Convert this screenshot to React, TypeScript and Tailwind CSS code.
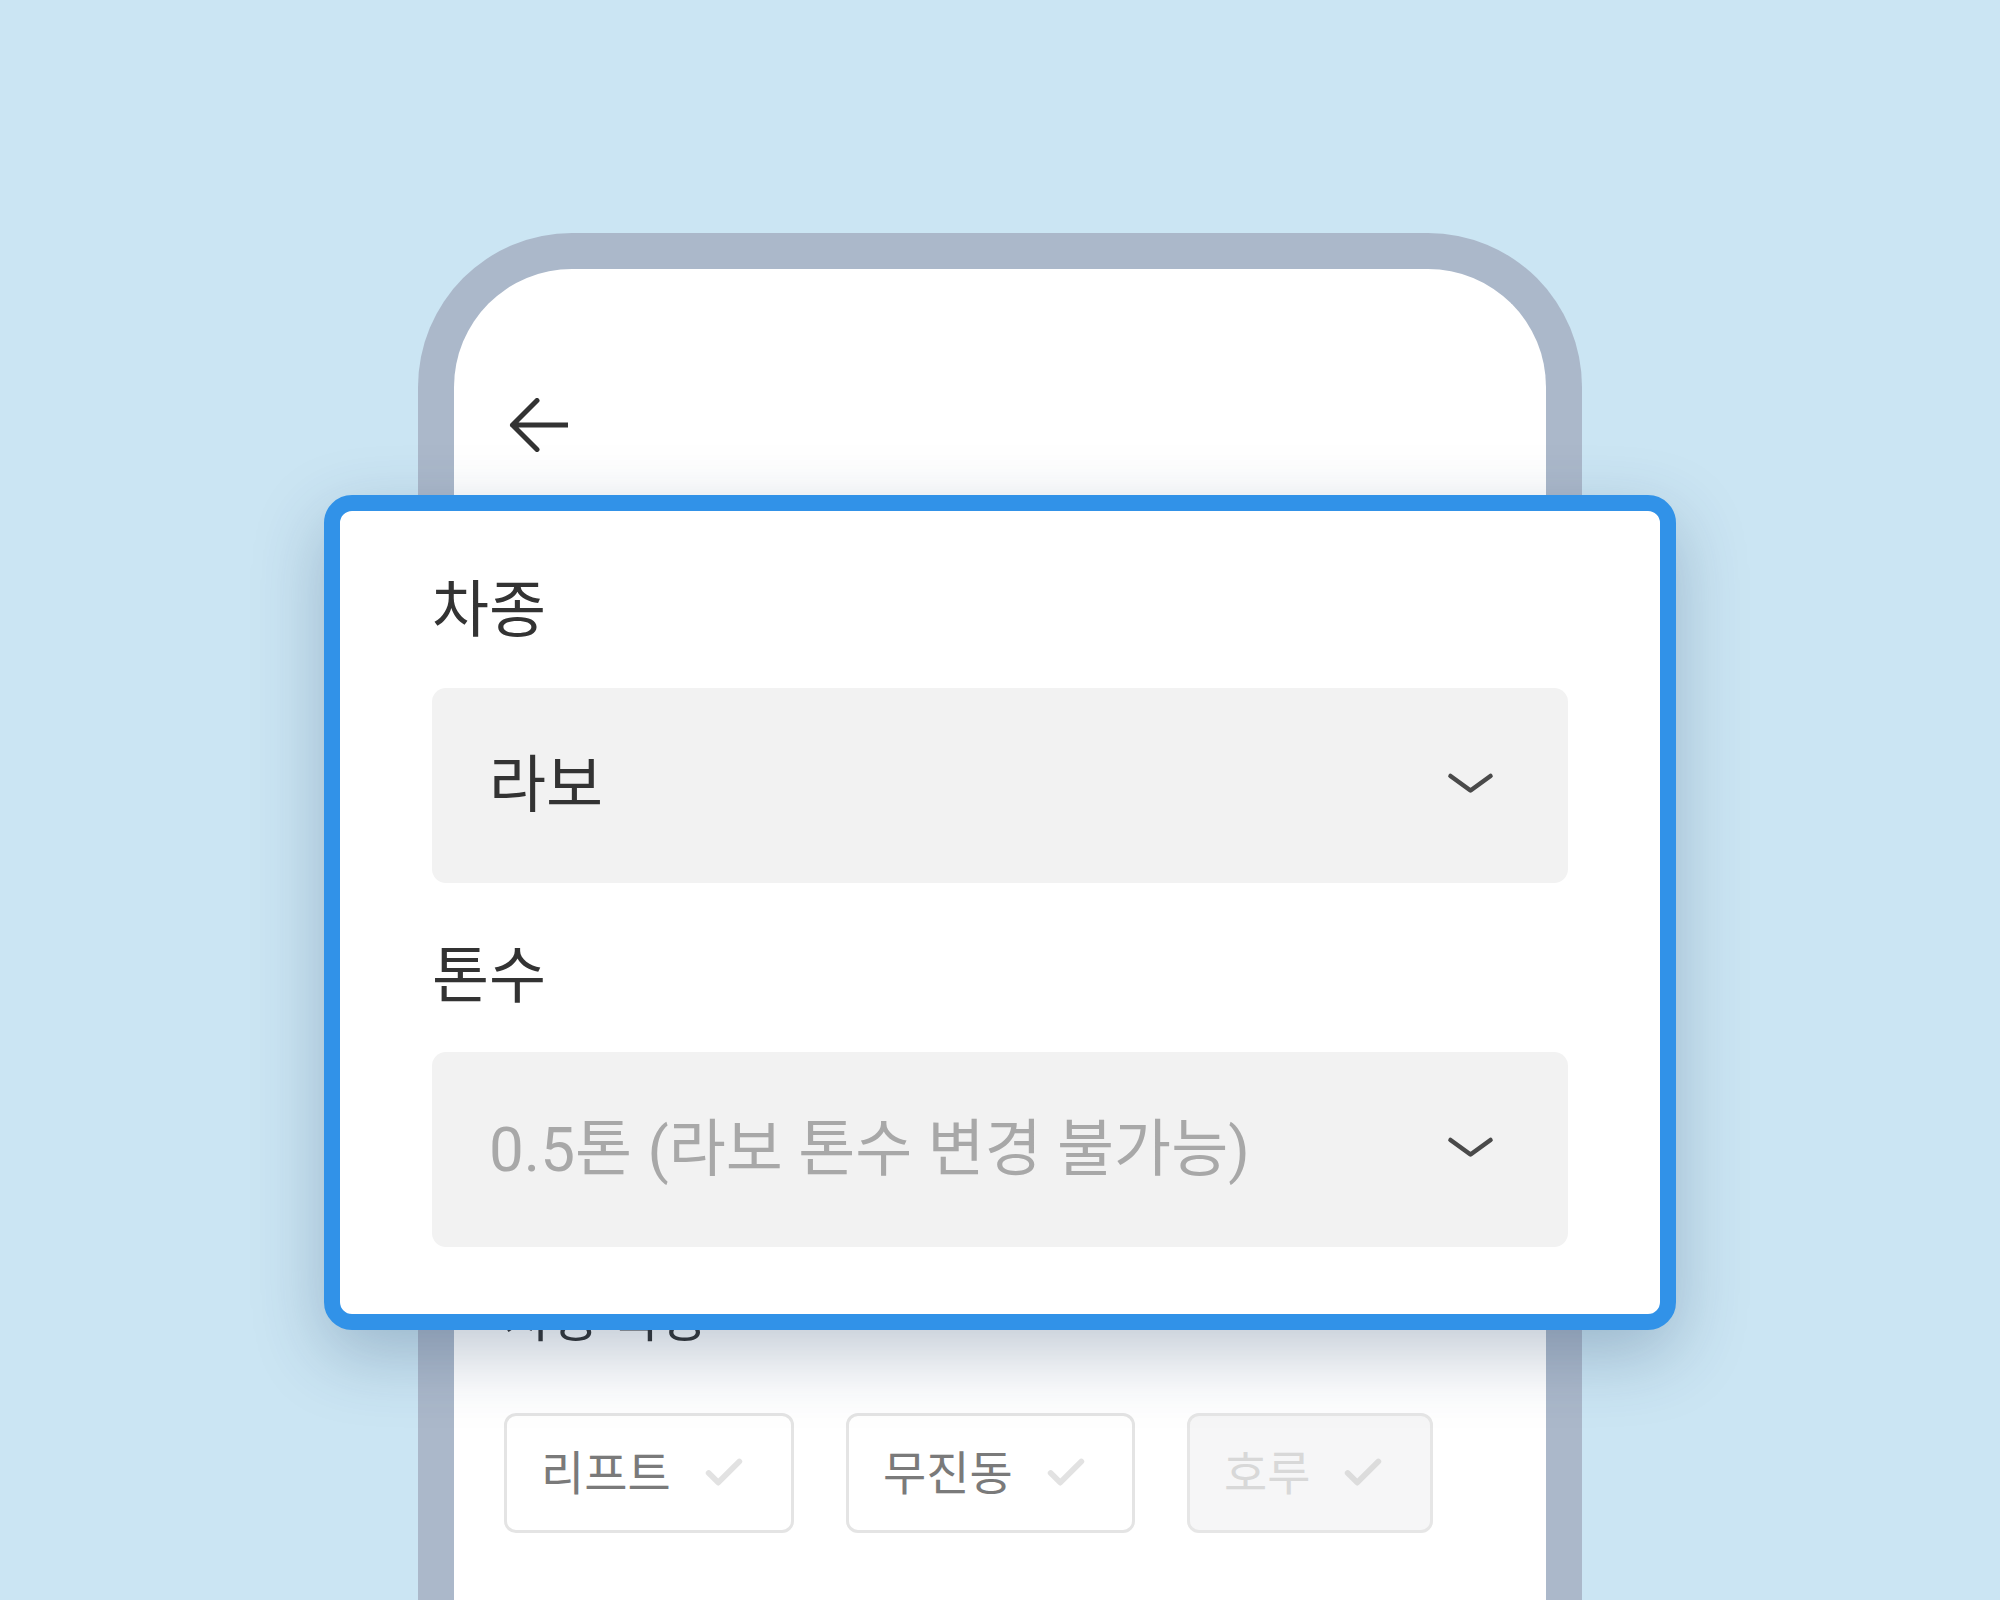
import { Check } from 'lucide-react'

function Chevron() {
  return (
    <svg width="47" height="27" viewBox="0 0 47 27" fill="none">
      <path d="M3.5 4 L23.5 18.5 L43.5 4" stroke="#4a4a4a" strokeWidth="4.6" strokeLinecap="round" strokeLinejoin="round" />
    </svg>
  )
}

function Select({ value, muted = false }: { value: string; muted?: boolean }) {
  return (
    <div className="flex h-[195px] items-center justify-between rounded-[14px] bg-[#f2f2f2] pl-[57px] pr-[74px]">
      <span className={`text-[62px] leading-none ${muted ? 'text-[#a8a8a8]' : 'text-[#333333]'}`}>{value}</span>
      <Chevron />
    </div>
  )
}

function Chip({ label, width, disabled = false }: { label: string; width: string; disabled?: boolean }) {
  return (
    <div
      className={`flex h-[120px] items-center gap-[30px] rounded-[12px] border-[3px] pl-[34px] ${width} ${
        disabled ? 'border-[#e6e6e6] bg-[#f6f6f7] text-[#d8d8d8]' : 'border-[#e4e4e4] bg-white text-[#7a7a7a]'
      }`}
    >
      <span className="text-[47px] leading-none">{label}</span>
      <Check size={46} strokeWidth={3} className={disabled ? 'text-[#dcdcdc]' : 'text-[#e2e2e2]'} />
    </div>
  )
}

export default function App() {
  return (
    <div className="relative h-[1600px] w-[2000px] overflow-hidden bg-[#cbe5f3] pt-[233px] font-['Roboto','Noto_Sans_CJK_KR',sans-serif]">
      {/* Phone */}
      <div className="mx-auto h-[1400px] w-[1164px] rounded-t-[154px] border-[36px] border-b-0 border-[#abb8ca] bg-white">
        <div className="flex flex-col pl-[50px] pt-[129px]">
          <svg width="64" height="54" viewBox="0 0 64 54" fill="none">
            <path d="M33 2.5 L8.5 27 L33 51.5 M8.5 27 H64" stroke="#333333" strokeWidth="5" strokeLinecap="round" strokeLinejoin="round" />
          </svg>
          <div className="mt-[842px] text-[52px] leading-none text-[#333333]">차량 특장</div>
          <div className="mt-[67px] flex gap-[52px]">
            <Chip label="리프트" width="w-[290px]" />
            <Chip label="무진동" width="w-[289px]" />
            <Chip label="호루" width="w-[246px]" disabled />
          </div>
        </div>
      </div>

      {/* Highlighted card over the phone */}
      <div className="absolute left-[324px] top-[495px] flex h-[835px] w-[1352px] flex-col rounded-[28px] border-[16px] border-[#3192e8] bg-white px-[92px] pt-[60px] shadow-[0_24px_70px_rgba(30,60,100,0.28)]">
        <div className="text-[62px] leading-[80px] text-[#333333]">차종</div>
        <div className="mt-[37px]">
          <Select value="라보" />
        </div>
        <div className="mt-[54px] text-[62px] leading-[80px] text-[#333333]">톤수</div>
        <div className="mt-[35px]">
          <Select value="0.5톤 (라보 톤수 변경 불가능)" muted />
        </div>
      </div>
    </div>
  )
}
